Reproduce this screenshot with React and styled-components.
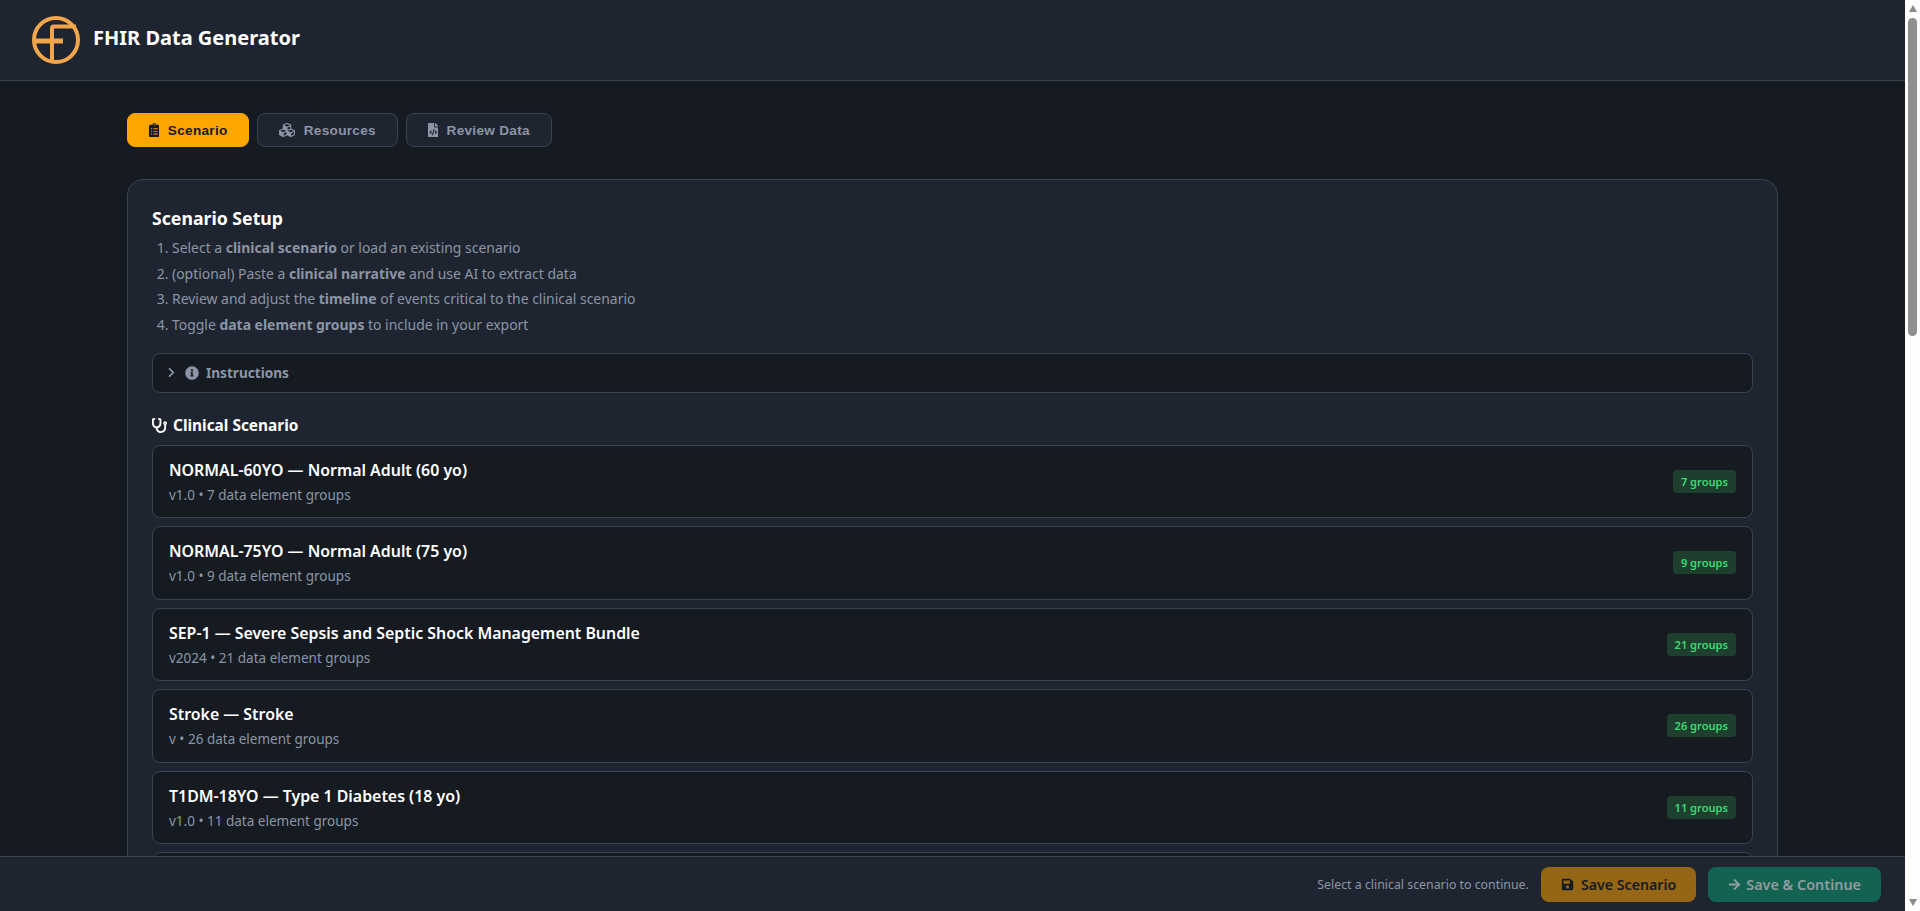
import React from "react";
import styled, { createGlobalStyle } from "styled-components";
import { FaChevronRight, FaArrowRight, FaClipboardList, FaCubes, FaFileCode, FaInfoCircle, FaSave, FaStethoscope } from "react-icons/fa";

const Global = createGlobalStyle`
  html, body { margin: 0; padding: 0; background: #161b22; height: 100%; overflow: hidden; }
  * { box-sizing: border-box; }
  body { font-family: "Noto Sans", "Open Sans", sans-serif; color: #fff; }
`;

const Shell = styled.div`
  display: flex;
  height: 100vh;
`;
const Column = styled.div`
  flex: 1;
  min-width: 0;
  display: flex;
  flex-direction: column;
`;
const Scroller = styled.div`
  flex: 1;
  min-height: 0;
  overflow: hidden;
`;
const Rail = styled.div`
  width: 15px;
  flex: none;
  background: #fdfdfd;
  display: flex;
  flex-direction: column;
  align-items: center;
  padding: 5px 0;
`;
const Arrow = styled.div`
  width: 0;
  height: 0;
  border-left: 4.5px solid transparent;
  border-right: 4.5px solid transparent;
  ${p => (p.$down ? "border-top: 7px solid #8a8a8a; margin-top: auto;" : "border-bottom: 7px solid #8a8a8a;")}
`;
const Thumb = styled.div`
  width: 9px;
  height: 318px;
  margin-top: 6px;
  background: #8f8f8f;
  border-radius: 4.5px;
`;

const Header = styled.header`
  height: 81px;
  background: #1f2530;
  border-bottom: 1px solid #3b4250;
  display: flex;
  align-items: center;
  padding: 0 32px;
  gap: 13px;
`;
const Title = styled.h1`
  margin: 0 0 5px;
  font-size: 20px;
  font-weight: 700;
  line-height: 1;
`;
const Main = styled.main`
  padding: 32px 127px 0;
`;
const Tabs = styled.nav`
  display: flex;
  gap: 8px;
  margin-bottom: 32px;
`;
const Tab = styled.button`
  height: 34px;
  display: flex;
  align-items: center;
  gap: 8.5px;
  padding: 0 20.8px;
  border-radius: 8px;
  font: 700 13.6px "Liberation Sans", Arial, sans-serif;
  letter-spacing: 0.3px;
  border: 1px solid ${p => (p.$active ? "#ffa500" : "#3b4250")};
  background: ${p => (p.$active ? "#ffa500" : "#1f2530")};
  color: ${p => (p.$active ? "#161b22" : "#8b95a5")};
`;
const NarrowTabIcon = styled.span`
  display: flex;
  svg { width: 10.5px; height: 14px; }
`;
const Panel = styled.section`
  background: #1f2530;
  border: 1px solid #3b4250;
  border-radius: 16px;
  padding: 24px;
`;
const PanelTitle = styled.h2`
  margin: 0 0 3px;
  font-size: 17.7px;
  line-height: 28px;
  font-weight: 700;
`;
const Steps = styled.ol`
  margin: 0 0 16px;
  padding: 0 0 0 20px;
  font-size: 13.95px;
  line-height: 25.5px;
  color: #8b95a5;
  b { font-weight: 700; }
`;
const Accordion = styled.div`
  height: 39.5px;
  border: 1px solid #3b4250;
  border-radius: 8px;
  background: #161b22;
  display: flex;
  align-items: center;
  padding: 0 11px 0 13px;
  gap: 8px;
  color: #8b95a5;
  font-size: 13.6px;
  font-weight: 700;
  margin-bottom: 23px;
`;
const AccordionInfo = styled.span`
  display: flex;
  align-items: center;
  gap: 7px;
`;
const SectionLabel = styled.div`
  display: flex;
  align-items: center;
  gap: 6px;
  font-size: 15.4px;
  font-weight: 700;
  line-height: 20px;
  margin-bottom: 9px;
`;
const List = styled.div`
  display: flex;
  flex-direction: column;
  gap: 8px;
`;
const Row = styled.div`
  height: 73.5px;
  flex: none;
  border: 1px solid #3b4250;
  border-radius: 8px;
  background: #161b22;
  display: flex;
  align-items: center;
  justify-content: space-between;
  padding: 0 16px;
`;
const RowName = styled.div`
  font-size: 15.9px;
  font-weight: 600;
  line-height: 24px;
`;
const RowMeta = styled.div`
  font-size: 13.5px;
  line-height: 20px;
  margin-top: 3px;
  color: #8b95a5;
`;
const Badge = styled.span`
  background: #1e3f2e;
  color: #3ddb74;
  font-size: 11.1px;
  font-weight: 600;
  padding: 4px 8px;
  border-radius: 4px;
`;
const Footer = styled.footer`
  flex: none;
  height: 55px;
  background: #1f2530;
  border-top: 1px solid #3b4250;
  display: flex;
  align-items: center;
  justify-content: flex-end;
  gap: 12px;
  padding: 0 24px;
`;
const Hint = styled.span`
  font-size: 12.35px;
  color: #8b95a5;
`;
const Action = styled.button`
  height: 35px;
  border: 0;
  border-radius: 8px;
  padding: 0 20px;
  display: flex;
  align-items: center;
  gap: ${p => p.$gap}px;
  font: 600 ${p => p.$size}px "Noto Sans", sans-serif;
  background: ${p => p.$bg};
  color: ${p => p.$fg};
`;
const Logo = styled.svg`
  width: 48px;
  height: 48px;
  flex: none;
`;

const scenarios = [
  { name: "NORMAL-60YO — Normal Adult (60 yo)", meta: "v1.0 • 7 data element groups", badge: "7 groups" },
  { name: "NORMAL-75YO — Normal Adult (75 yo)", meta: "v1.0 • 9 data element groups", badge: "9 groups" },
  { name: "SEP-1 — Severe Sepsis and Septic Shock Management Bundle", meta: "v2024 • 21 data element groups", badge: "21 groups" },
  { name: "Stroke — Stroke", meta: "v • 26 data element groups", badge: "26 groups" },
  { name: "T1DM-18YO — Type 1 Diabetes (18 yo)", meta: "v1.0 • 11 data element groups", badge: "11 groups" },
];

export default function App() {
  return (
    <Shell>
      <Global />
      <Column>
        <Scroller>
          <Header>
            <Logo viewBox="0 0 48 48" fill="none" stroke="#f2a64c" strokeWidth="4">
              <circle cx="24" cy="24" r="22" />
              <path d="M20 46V12.5Q20 10.5 22 10.5H44" />
              <path d="M2 25H31" strokeWidth="5" />
            </Logo>
            <Title>FHIR Data Generator</Title>
          </Header>
          <Main>
            <Tabs>
              <Tab $active><NarrowTabIcon><FaClipboardList /></NarrowTabIcon>Scenario</Tab>
              <Tab><FaCubes size={16} />Resources</Tab>
              <Tab><NarrowTabIcon><FaFileCode /></NarrowTabIcon>Review Data</Tab>
            </Tabs>
            <Panel>
              <PanelTitle>Scenario Setup</PanelTitle>
              <Steps>
                <li>Select a <b>clinical scenario</b> or load an existing scenario</li>
                <li>(optional) Paste a <b>clinical narrative</b> and use AI to extract data</li>
                <li>Review and adjust the <b>timeline</b> of events critical to the clinical scenario</li>
                <li>Toggle <b>data element groups</b> to include in your export</li>
              </Steps>
              <Accordion>
                <FaChevronRight size={11} />
                <AccordionInfo><FaInfoCircle size={14} />Instructions</AccordionInfo>
              </Accordion>
              <SectionLabel><FaStethoscope size={15} />Clinical Scenario</SectionLabel>
              <List>
                {scenarios.map(s => (
                  <Row key={s.name}>
                    <div>
                      <RowName>{s.name}</RowName>
                      <RowMeta>{s.meta}</RowMeta>
                    </div>
                    <Badge>{s.badge}</Badge>
                  </Row>
                ))}
                <Row />
              </List>
            </Panel>
          </Main>
        </Scroller>
        <Footer>
          <Hint>Select a clinical scenario to continue.</Hint>
          <Action $bg="#946616" $fg="#161b22" $gap={7} $size={14.2}><FaSave size={13} />Save Scenario</Action>
          <Action $bg="#126351" $fg="#8e9ea0" $gap={5} $size={14.4}><FaArrowRight size={13} />Save &amp; Continue</Action>
        </Footer>
      </Column>
      <Rail>
        <Arrow />
        <Thumb />
        <Arrow $down />
      </Rail>
    </Shell>
  );
}
